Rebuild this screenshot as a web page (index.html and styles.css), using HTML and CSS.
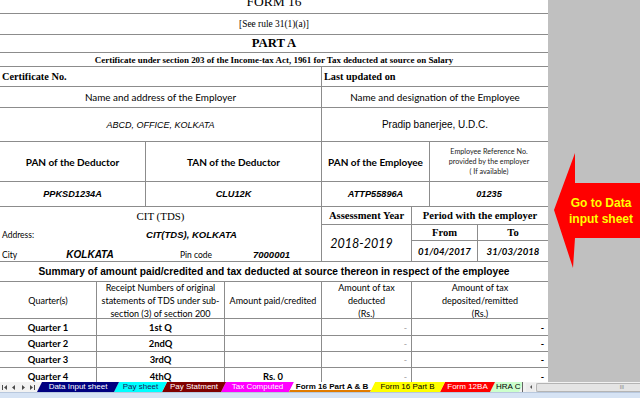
FILE: index.html
```html
<!DOCTYPE html>
<html lang="en">
<head>
  <meta charset="UTF-8" />
  <meta name="viewport" content="width=device-width, initial-scale=1.0" />
  <title>Form 16 Part A &amp; B</title>
  <link rel="stylesheet" href="styles.css">
</head>
<body>
  <div class="window">
    <div class="workarea">
      <div class="sheet">
        <div class="banner form-title">FORM 16</div>
        <div class="banner rule">[See rule 31(1)(a)]</div>
        <div class="banner part">PART A</div>
        <div class="banner cert">Certificate under section 203 of the Income-tax Act, 1961 for Tax deducted at source on Salary</div>

        <div class="band parties">
          <div class="cell start head-serif">Certificate No.</div>
          <div class="cell start head-serif end">Last updated on</div>
          <div class="cell head-sans">Name and address of the Employer</div>
          <div class="cell head-sans end">Name and designation of the Employee</div>
          <div class="cell value-italic">ABCD, OFFICE, KOLKATA</div>
          <div class="cell value-plain end">Pradip banerjee, U.D.C.</div>
        </div>

        <div class="band ids">
          <div class="cell head-bold">PAN of the Deductor</div>
          <div class="cell head-bold">TAN of the Deductor</div>
          <div class="cell head-bold">PAN of the Employee</div>
          <div class="cell note end">Employee Reference No.<br>provided by the employer<br>( If available)</div>
          <div class="cell value-bold">PPKSD1234A</div>
          <div class="cell value-bold">CLU12K</div>
          <div class="cell value-bold">ATTP55896A</div>
          <div class="cell value-bold end">01235</div>
        </div>

        <div class="band authority">
          <div class="cell cit">
            <div class="cit-title">CIT (TDS)</div>
            <div class="cit-row cit-address">
              <span class="small-label">Address:</span>
              <span class="cit-value">CIT(TDS), KOLKATA</span>
            </div>
            <div class="cit-row cit-city">
              <span class="small-label">City</span>
              <span class="city-value">KOLKATA</span>
              <span class="small-label centered">Pin code</span>
              <span class="pin-value">7000001</span>
            </div>
          </div>
          <div class="cell head-period">Assessment Year</div>
          <div class="cell head-period period end">Period with the employer</div>
          <div class="cell ay-value">2018-2019</div>
          <div class="cell head-period">From</div>
          <div class="cell head-period end">To</div>
          <div class="cell date">01/04/2017</div>
          <div class="cell date end">31/03/2018</div>
        </div>

        <div class="banner summary">Summary of amount paid/credited and tax deducted at source thereon in respect of the employee</div>

        <div class="band quarters">
          <div class="cell col-head">Quarter(s)</div>
          <div class="cell col-head">Receipt Numbers of original<br>statements of TDS under sub-<br>section (3) of section 200</div>
          <div class="cell col-head">Amount paid/credited</div>
          <div class="cell col-head">Amount of tax<br>deducted<br>(Rs.)</div>
          <div class="cell col-head end">Amount of tax<br>deposited/remitted<br>(Rs.)</div>

          <div class="cell q">Quarter 1</div>
          <div class="cell q">1st Q</div>
          <div class="cell q"></div>
          <div class="cell dash">-</div>
          <div class="cell dash-strong end">-</div>

          <div class="cell q">Quarter 2</div>
          <div class="cell q">2ndQ</div>
          <div class="cell q"></div>
          <div class="cell dash">-</div>
          <div class="cell dash-strong end">-</div>

          <div class="cell q">Quarter 3</div>
          <div class="cell q">3rdQ</div>
          <div class="cell q"></div>
          <div class="cell dash">-</div>
          <div class="cell dash-strong end">-</div>

          <div class="cell q">Quarter 4</div>
          <div class="cell q">4thQ</div>
          <div class="cell q">Rs. 0</div>
          <div class="cell dash">-</div>
          <div class="cell dash-strong end">-</div>
        </div>
      </div>

      <div class="margin">
        <div class="callout">
          <svg class="callout-shape" width="86" height="115" viewBox="0 0 86 115">
            <polygon points="0,57 21,0 21,30 86,30 86,85 21,85 19,115" fill="#ff0000" />
          </svg>
          <div class="callout-text">Go to Data<br>input sheet</div>
        </div>
      </div>
    </div>

    <div class="tabbar">
      <div class="tab-nav">
        <svg width="40" height="10" viewBox="0 0 40 10">
          <rect x="2" y="3" width="1" height="5" fill="#4a4a4a" />
          <polygon points="7,3 4,5.5 7,8" fill="#4a4a4a" />
          <polygon points="15,3 12,5.5 15,8" fill="#4a4a4a" />
          <polygon points="22,3 25,5.5 22,8" fill="#4a4a4a" />
          <polygon points="30,3 33,5.5 30,8" fill="#4a4a4a" />
          <rect x="34" y="3" width="1" height="5" fill="#4a4a4a" />
        </svg>
      </div>
      <div class="tabs">
        <span class="tab tab-navy">Data Input sheet</span>
        <span class="tab tab-cyan">Pay sheet</span>
        <span class="tab tab-maroon">Pay Statment</span>
        <span class="tab tab-magenta">Tax Computed</span>
        <span class="tab tab-active">Form 16 Part A &amp; B</span>
        <span class="tab tab-yellow">Form 16 Part B</span>
        <span class="tab tab-red">Form 12BA</span>
        <span class="tab tab-green">HRA C</span>
      </div>
      <div class="hscroll">
        <span class="scroll-btn">
          <svg width="8" height="8" viewBox="0 0 8 8"><polygon points="5,2 3,4 5,6" fill="#555" /></svg>
        </span>
        <span class="thumb"><span class="grip">III</span></span>
      </div>
    </div>
    <div class="statusbar"></div>
  </div>
</body>
</html>
```

FILE: styles.css
```css
:root {
  --grid: #8c8c8c;
  --calibri: "Lato", "Noto Sans", sans-serif;
  --arial: "Liberation Sans", Arial, sans-serif;
  --cambria: "Liberation Serif", "Times New Roman", serif;
}

* {
  box-sizing: border-box;
}

body {
  margin: 0;
  width: 640px;
  height: 398px;
  overflow: hidden;
  background: #c0c0c0;
  font-family: var(--calibri);
  color: #000;
}

.window {
  display: flex;
  flex-direction: column;
  height: 398px;
}

.workarea {
  display: flex;
  height: 382px;
  overflow: hidden;
}

.sheet {
  width: 548px;
  flex: none;
  background: #fff;
  display: flex;
  flex-direction: column;
}

.margin {
  flex: 1;
  position: relative;
  background: #c0c0c0;
}

/* full width rows */
.banner {
  display: flex;
  align-items: center;
  justify-content: center;
  border-bottom: 1px solid var(--grid);
  white-space: nowrap;
  overflow: hidden;
  flex: none;
}

.form-title {
  height: 14px;
  align-items: flex-end;
  padding-bottom: 5px;
  font-family: var(--cambria);
  font-size: 13.5px;
  line-height: 13px;
}

.rule {
  height: 21px;
  font-family: var(--cambria);
  font-size: 9.4px;
}

.part {
  height: 18px;
  font-family: var(--cambria);
  font-size: 12.7px;
  font-weight: bold;
}

.cert {
  height: 14px;
  font-family: var(--cambria);
  font-size: 8.95px;
  font-weight: bold;
}

.summary {
  height: 20px;
  font-family: var(--arial);
  font-size: 10.2px;
  font-weight: bold;
}

/* grid bands */
.band {
  display: grid;
  flex: none;
}

.parties {
  grid-template-columns: 322px 226px;
  grid-template-rows: 20px 21px 34px;
}

.ids {
  grid-template-columns: 146px 176px 108px 118px;
  grid-template-rows: 40px 25px;
}

.authority {
  grid-template-columns: 322px 90px 66px 70px;
  grid-template-rows: 18px 16px 21px;
}

.quarters {
  grid-template-columns: 97px 128px 97px 90px 136px;
  grid-template-rows: 37px 17px 16px 16px 17px;
}

.cell {
  display: flex;
  align-items: center;
  justify-content: center;
  text-align: center;
  white-space: nowrap;
  overflow: hidden;
  border-right: 1px solid var(--grid);
  border-bottom: 1px solid var(--grid);
}

.cell.end {
  border-right: none;
}

.cell.start {
  justify-content: flex-start;
  padding-left: 2px;
}

.head-serif {
  font-family: var(--cambria);
  font-size: 10.3px;
  font-weight: bold;
}

.head-sans {
  font-size: 9.9px;
}

.value-italic {
  font-family: var(--arial);
  font-style: italic;
  font-size: 9px;
}

.value-plain {
  font-family: var(--arial);
  font-size: 10px;
}

.head-bold {
  font-size: 10px;
  font-weight: bold;
}

.note {
  font-size: 7.2px;
  line-height: 10px;
  color: #222;
}

.value-bold {
  font-family: var(--arial);
  font-style: italic;
  font-weight: bold;
  font-size: 9.2px;
}

/* CIT block */
.cit {
  grid-row: span 3;
  flex-direction: column;
  align-items: stretch;
  justify-content: flex-start;
}

.cit-title {
  height: 18px;
  display: flex;
  align-items: center;
  justify-content: center;
  font-family: var(--cambria);
  font-size: 10.9px;
}

.cit-row {
  display: grid;
  align-items: end;
  padding-bottom: 1px;
}

.cit-address {
  height: 16px;
  grid-template-columns: 62px 1fr;
}

.cit-city {
  height: 20px;
  grid-template-columns: 40px 100px 112px 1fr;
}

.small-label {
  font-size: 8.5px;
  text-align: left;
  padding-left: 2px;
}

.small-label.centered {
  text-align: center;
  padding-left: 0;
}

.cit-value,
.city-value,
.pin-value {
  font-family: var(--arial);
  font-style: italic;
  font-weight: bold;
  text-align: center;
}

.cit-value {
  font-size: 9.5px;
}

.city-value {
  font-size: 10px;
}

.pin-value {
  font-size: 9.5px;
  text-align: left;
  padding-left: 1px;
}

.head-period {
  font-family: var(--cambria);
  font-size: 10.6px;
  font-weight: bold;
}

.period {
  grid-column: span 2;
}

.ay-value {
  grid-row: span 2;
  font-size: 12.5px;
  font-style: italic;
  padding-right: 10px;
}

.date {
  font-size: 9.6px;
  font-style: italic;
  font-weight: bold;
}

/* quarter table */
.col-head {
  font-size: 9px;
  line-height: 13px;
}

.q {
  font-size: 9.4px;
  font-weight: bold;
}

.dash {
  justify-content: flex-end;
  padding-right: 4px;
  color: #a0a0a0;
  font-size: 9px;
}

.dash-strong {
  justify-content: flex-end;
  padding-right: 4px;
  font-weight: bold;
  font-size: 9px;
}

/* red arrow */
.callout {
  position: absolute;
  left: 6px;
  top: 153px;
  width: 86px;
  height: 115px;
}

.callout-shape {
  position: absolute;
  left: 0;
  top: 0;
}

.callout-text {
  position: relative;
  padding: 42px 0 0 8px;
  text-align: center;
  font-family: var(--arial);
  font-weight: bold;
  font-size: 12px;
  line-height: 16px;
  color: #ffff00;
}

/* sheet tabs */
.tabbar {
  height: 10px;
  display: flex;
  background: #f2f2f2;
  flex: none;
}

.tab-nav {
  width: 37px;
  flex: none;
}

.tab-nav svg {
  display: block;
}

.tabs {
  display: flex;
  width: 485px;
  flex: none;
  overflow: hidden;
}

.tab {
  position: relative;
  height: 10px;
  flex: none;
  margin-left: -5px;
  clip-path: polygon(5px 0, 100% 0, calc(100% - 5px) 100%, 0 100%);
  font-family: var(--arial);
  font-size: 8px;
  line-height: 10px;
  text-align: center;
  white-space: nowrap;
}

.tab:first-child {
  margin-left: 0;
}

.tab-navy { width: 82px; background: #000080; color: #fff; z-index: 8; }
.tab-cyan { width: 53px; background: #00ffff; color: #1a1a5a; z-index: 7; }
.tab-maroon { width: 64px; background: #800000; color: #fff; z-index: 6; }
.tab-magenta { width: 73px; background: #ff00ff; color: #fff; z-index: 5; }
.tab-active {
  width: 86px;
  background: #fff;
  color: #000;
  font-weight: bold;
  border-bottom: 2px solid #e07b00;
  line-height: 9px;
  z-index: 9;
}
.tab-yellow { width: 75px; background: #ffff00; color: #000; z-index: 4; }
.tab-red { width: 55px; background: #ff0000; color: #fff; z-index: 3; }
.tab-green { width: 34px; background: #ccffcc; color: #000; z-index: 2; text-align: left; padding-left: 6px; }

.hscroll {
  flex: 1;
  display: flex;
  align-items: center;
  border-left: 1px solid #666;
  padding-left: 3px;
  gap: 1px;
}

.scroll-btn {
  width: 9px;
  height: 9px;
  display: flex;
  align-items: center;
  justify-content: center;
  background: #ececec;
}

.thumb {
  flex: 1;
  height: 9px;
  background: #e4e4e4;
  border: 1px solid #b4b4b4;
  border-right: none;
  border-radius: 2px 0 0 2px;
  display: flex;
  align-items: center;
  justify-content: flex-end;
  padding-right: 16px;
  font-family: var(--arial);
  font-size: 5px;
  color: #777;
}

.statusbar {
  flex: 1;
  background: #d6e3f4;
  border-top: 1px solid #b8c8de;
}
```
